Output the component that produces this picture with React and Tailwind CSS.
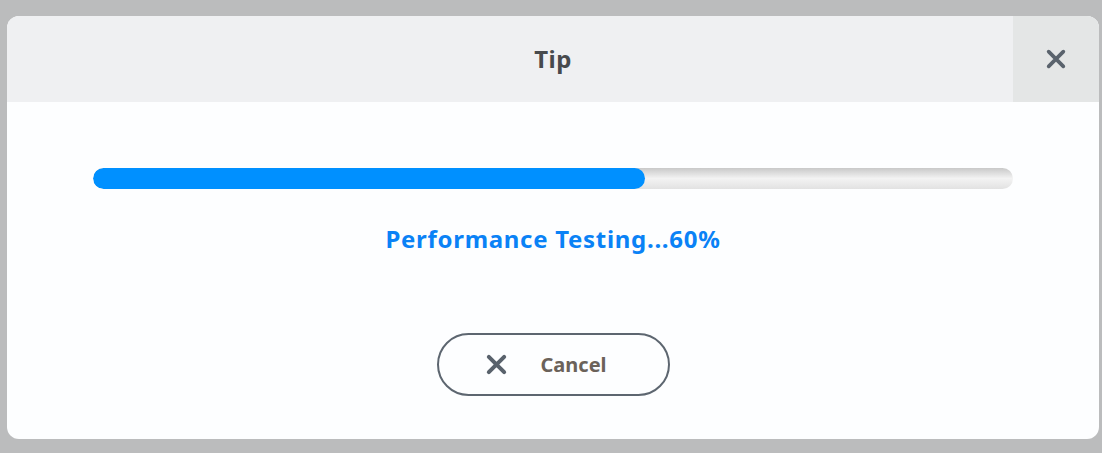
import React from "react";

function XIcon({ className, weight = 4 }) {
  return (
    <svg viewBox="0 0 24 24" className={className} fill="none" stroke="currentColor" strokeWidth={weight} strokeLinecap="round">
      <path d="M4 4 L20 20 M20 4 L4 20" />
    </svg>
  );
}

export default function App() {
  const progress = 60;

  return (
    <div className="flex h-[453px] w-[1102px] bg-[#bbbcbd] pl-[7px] pr-[3px] pt-[16px] pb-[14px] font-['Noto_Sans',sans-serif]">
      <div className="flex flex-1 flex-col overflow-hidden rounded-[12px] bg-[#fdfeff]">
        <div className="flex h-[86px] items-stretch bg-[#eff0f2]">
          <div className="flex flex-1 items-center justify-center pl-[86px]">
            <h2 className="text-[24px] font-bold tracking-[0.5px] text-[#474a4d]">Tip</h2>
          </div>
          <button className="flex w-[86px] items-center justify-center bg-[#e4e6e6] text-[#5a636d]">
            <XIcon className="h-[22px] w-[22px]" />
          </button>
        </div>

        <div className="flex flex-1 flex-col items-center px-[86px] pt-[66px]">
          <div className="h-[21px] w-full overflow-hidden rounded-full bg-gradient-to-b from-[#c9c9c9] via-[#f3f3f3] to-[#e2e2e2]">
            <div className="h-full rounded-full bg-[#0090ff]" style={{ width: `${progress}%` }} />
          </div>
          <p className="mt-[36px] text-[24px] font-bold leading-[28px] tracking-[0.7px] text-[#0a82f6]">
            Performance Testing...{progress}%
          </p>

          <button className="mt-[80px] flex h-[63px] w-[233px] items-center rounded-full border-2 border-[#5d6670] pl-[46px] text-[#6b625a]">
            <XIcon className="h-[23px] w-[23px] text-[#59626c]" weight={4.2} />
            <span className="ml-[33px] text-[20px] font-bold">Cancel</span>
          </button>
        </div>
      </div>
    </div>
  );
}
